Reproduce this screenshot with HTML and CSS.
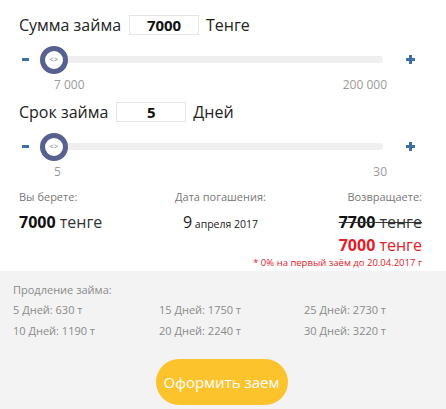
FILE: index.html
```html
<!DOCTYPE html>
<html lang="ru">
<head>
  <meta charset="UTF-8" />
  <title>Калькулятор займа</title>
  <link rel="stylesheet" href="styles.css">
</head>
<body>
  <div class="calc">
    <div class="field-row first">
      <span class="field-label">Сумма займа</span>
      <span class="field-input">7000</span>
      <span class="field-unit">Тенге</span>
    </div>
    <div class="slider">
      <span class="minus"></span>
      <div class="track">
        <span class="thumb">&lt;&gt;</span>
      </div>
      <span class="plus"></span>
    </div>
    <div class="limits">
      <span>7 000</span>
      <span>200 000</span>
    </div>

    <div class="field-row">
      <span class="field-label">Срок займа</span>
      <span class="field-input">5</span>
      <span class="field-unit">Дней</span>
    </div>
    <div class="slider">
      <span class="minus"></span>
      <div class="track">
        <span class="thumb">&lt;&gt;</span>
      </div>
      <span class="plus"></span>
    </div>
    <div class="limits">
      <span>5</span>
      <span>30</span>
    </div>

    <div class="summary">
      <div class="col">
        <div class="col-title">Вы берете:</div>
        <div class="money"><b>7000</b> тенге</div>
      </div>
      <div class="col center">
        <div class="col-title">Дата погашения:</div>
        <div class="date"><span class="day">9</span> апреля 2017</div>
      </div>
      <div class="col right">
        <div class="col-title">Возвращаете:</div>
        <div class="money old"><b>7700</b> тенге</div>
        <div class="money red"><b>7000</b> тенге</div>
        <div class="promo">* 0% на первый заём до 20.04.2017 г</div>
      </div>
    </div>
  </div>

  <div class="extend">
    <div class="extend-title">Продление займа:</div>
    <div class="extend-grid">
      <span>5 Дней: 630 т</span>
      <span>15 Дней: 1750 т</span>
      <span>25 Дней: 2730 т</span>
      <span>10 Дней: 1190 т</span>
      <span>20 Дней: 2240 т</span>
      <span>30 Дней: 3220 т</span>
    </div>
    <div class="btn-wrap">
      <a class="btn" href="#">Оформить заем</a>
    </div>
  </div>
</body>
</html>
```

FILE: styles.css
```css
body {
  margin: 0;
  font-family: 'Open Sans', 'Liberation Sans', sans-serif;
  background: #ffffff;
  color: #222;
  width: 446px;
  height: 409px;
  overflow: hidden;
}

.calc {
  padding: 0 24px 0 19px;
}

.field-row {
  display: flex;
  align-items: center;
  height: 20px;
  margin-top: 9px;
  font-size: 16px;
  color: #222;
}

.field-row.first {
  margin-top: 15px;
}

.field-input {
  width: 68px;
  height: 18px;
  border: 1px solid #e4e4e4;
  margin: 0 7px 0 8px;
  text-align: center;
  font-weight: bold;
  font-size: 15px;
  line-height: 18px;
  color: #111;
}

.slider {
  display: flex;
  align-items: center;
  height: 28px;
  margin-top: 10px;
}

.minus {
  width: 7px;
  height: 3px;
  background: #3d6ea5;
  margin-left: 3px;
}

.track {
  position: relative;
  flex: 1;
  height: 7px;
  margin-left: 11px;
  background: #efefef;
  border-radius: 4px;
}

.thumb {
  position: absolute;
  left: 0;
  top: -10px;
  width: 18px;
  height: 18px;
  border: 5px solid #57608f;
  border-radius: 50%;
  background: #fff;
  font-size: 7px;
  line-height: 18px;
  text-align: center;
  color: #666;
  letter-spacing: 0.5px;
}

.plus {
  position: relative;
  width: 9px;
  height: 9px;
  margin: 0 7px 0 23px;
}

.plus::before,
.plus::after {
  content: '';
  position: absolute;
  background: #3d6ea5;
}

.plus::before {
  left: 0; top: 3px;
  width: 9px; height: 3px;
}

.plus::after {
  left: 3px; top: 0;
  width: 3px; height: 9px;
}

.limits {
  display: flex;
  justify-content: space-between;
  margin: 4px 35px 0 35px;
  font-size: 12px;
  line-height: 16px;
  color: #9a9a9a;
}

.summary {
  display: grid;
  grid-template-columns: 1fr 1fr 1fr;
  margin-top: 9px;
  white-space: nowrap;
}

.col {
  min-width: 0;
}

.col.center {
  text-align: center;
}

.col.right {
  display: flex;
  flex-direction: column;
  align-items: flex-end;
}

.col-title {
  font-size: 11px;
  line-height: 15px;
  color: #777;
}

.money {
  margin-top: 7px;
  font-size: 16px;
  line-height: 22px;
  color: #333;
}

.money b {
  color: #111;
}

.money.old {
  text-decoration: line-through;
}

.money.red {
  margin-top: 1px;
  color: #e0202a;
}

.money.red b {
  color: #e0202a;
}

.date {
  margin-top: 7px;
  font-size: 10.5px;
  line-height: 22px;
  color: #222;
}

.date .day {
  font-size: 16px;
}

.promo {
  font-size: 9.5px;
  line-height: 14px;
  color: #e0202a;
}

.extend {
  margin-top: 1px;
  background: #f3f3f3;
  padding: 11px 13px 0 13px;
  height: 127px;
}

.extend-title,
.extend-grid {
  font-size: 11px;
  color: #8a8a8a;
}

.extend-title {
  line-height: 16px;
}

.extend-grid {
  display: grid;
  grid-template-columns: 146px 145px 1fr;
  row-gap: 5px;
  margin-top: 4px;
  line-height: 16px;
}

.btn-wrap {
  display: flex;
  justify-content: center;
  margin-top: 20px;
}

.btn {
  display: block;
  width: 132px;
  height: 46px;
  line-height: 46px;
  border-radius: 23px;
  background: #fcc32d;
  color: #fff;
  text-align: center;
  text-decoration: none;
  font-size: 15px;
  margin-left: -3px;
}
```
